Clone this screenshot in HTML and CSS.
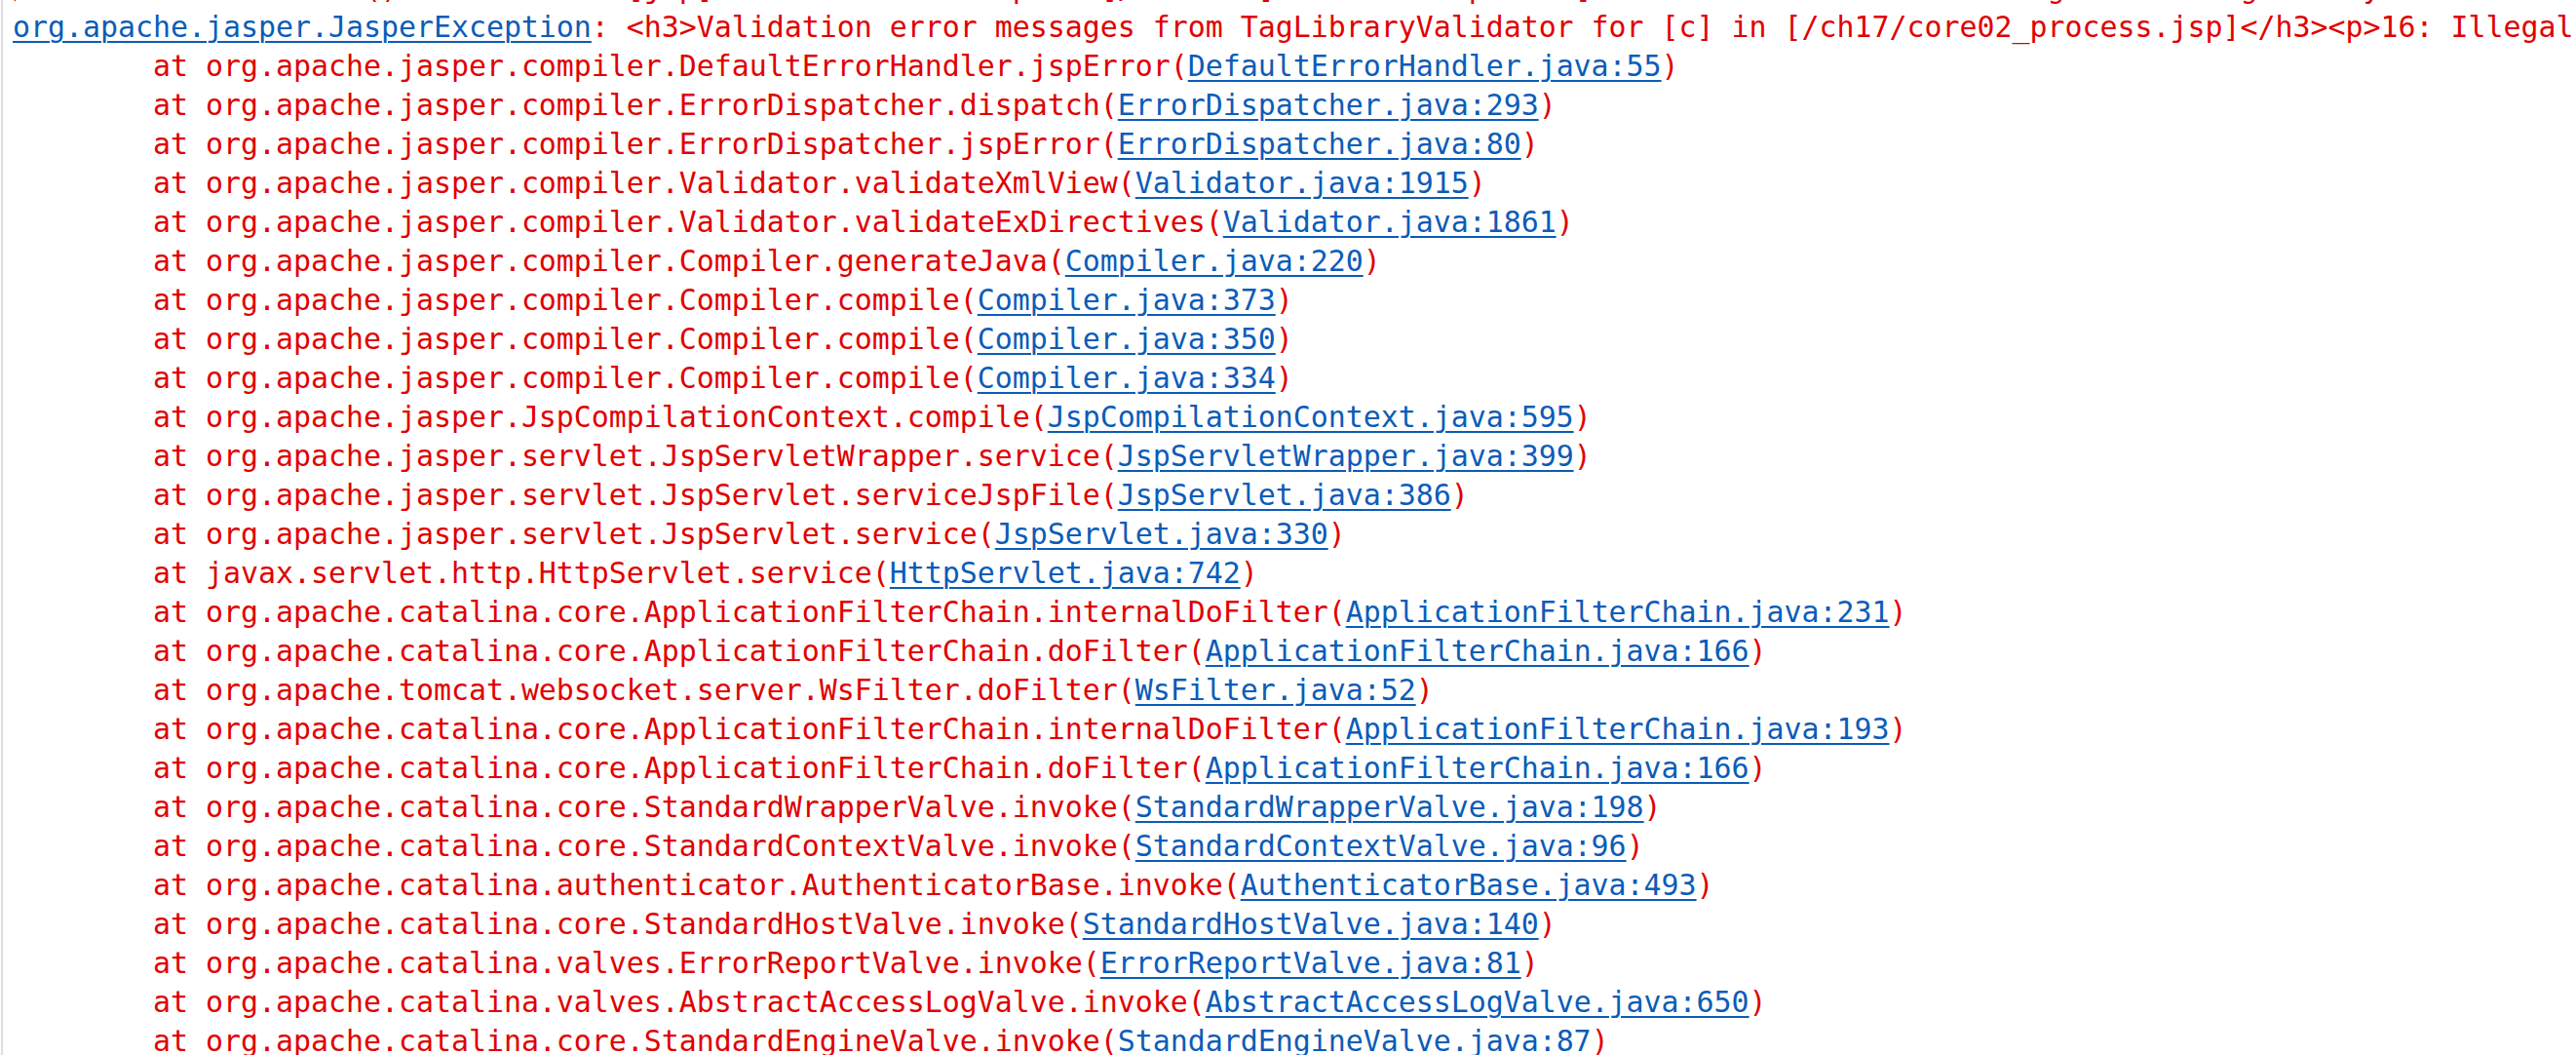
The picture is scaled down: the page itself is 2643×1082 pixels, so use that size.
FILE: index.html
```html
<!DOCTYPE html>
<html lang="en">
<head>
<meta charset="utf-8">
<title>Console</title>
<link rel="stylesheet" href="styles.css">
</head>
<body>
<div class="console">
<div class="log">
<div class="line"><span class="prefix">严重: </span>Servlet.service() for servlet [jsp] in context with path [/ch17web] threw exception [&lt;h3&gt;Validation error messages from TagLibraryValidator for [c] in [/ch17/core02_process.jsp]&lt;/h3&gt;&lt;p&gt;16: Illegal text inside "c:choose" tag</div>
<div class="line"><span class="link">org.apache.jasper.JasperException</span>: &lt;h3&gt;Validation error messages from TagLibraryValidator for [c] in [/ch17/core02_process.jsp]&lt;/h3&gt;&lt;p&gt;16: Illegal text inside "c:choose" tag: "&lt;br&gt;".&lt;/p&gt;</div>
<div class="line">	at org.apache.jasper.compiler.DefaultErrorHandler.jspError(<span class="link">DefaultErrorHandler.java:55</span>)</div>
<div class="line">	at org.apache.jasper.compiler.ErrorDispatcher.dispatch(<span class="link">ErrorDispatcher.java:293</span>)</div>
<div class="line">	at org.apache.jasper.compiler.ErrorDispatcher.jspError(<span class="link">ErrorDispatcher.java:80</span>)</div>
<div class="line">	at org.apache.jasper.compiler.Validator.validateXmlView(<span class="link">Validator.java:1915</span>)</div>
<div class="line">	at org.apache.jasper.compiler.Validator.validateExDirectives(<span class="link">Validator.java:1861</span>)</div>
<div class="line">	at org.apache.jasper.compiler.Compiler.generateJava(<span class="link">Compiler.java:220</span>)</div>
<div class="line">	at org.apache.jasper.compiler.Compiler.compile(<span class="link">Compiler.java:373</span>)</div>
<div class="line">	at org.apache.jasper.compiler.Compiler.compile(<span class="link">Compiler.java:350</span>)</div>
<div class="line">	at org.apache.jasper.compiler.Compiler.compile(<span class="link">Compiler.java:334</span>)</div>
<div class="line">	at org.apache.jasper.JspCompilationContext.compile(<span class="link">JspCompilationContext.java:595</span>)</div>
<div class="line">	at org.apache.jasper.servlet.JspServletWrapper.service(<span class="link">JspServletWrapper.java:399</span>)</div>
<div class="line">	at org.apache.jasper.servlet.JspServlet.serviceJspFile(<span class="link">JspServlet.java:386</span>)</div>
<div class="line">	at org.apache.jasper.servlet.JspServlet.service(<span class="link">JspServlet.java:330</span>)</div>
<div class="line">	at javax.servlet.http.HttpServlet.service(<span class="link">HttpServlet.java:742</span>)</div>
<div class="line">	at org.apache.catalina.core.ApplicationFilterChain.internalDoFilter(<span class="link">ApplicationFilterChain.java:231</span>)</div>
<div class="line">	at org.apache.catalina.core.ApplicationFilterChain.doFilter(<span class="link">ApplicationFilterChain.java:166</span>)</div>
<div class="line">	at org.apache.tomcat.websocket.server.WsFilter.doFilter(<span class="link">WsFilter.java:52</span>)</div>
<div class="line">	at org.apache.catalina.core.ApplicationFilterChain.internalDoFilter(<span class="link">ApplicationFilterChain.java:193</span>)</div>
<div class="line">	at org.apache.catalina.core.ApplicationFilterChain.doFilter(<span class="link">ApplicationFilterChain.java:166</span>)</div>
<div class="line">	at org.apache.catalina.core.StandardWrapperValve.invoke(<span class="link">StandardWrapperValve.java:198</span>)</div>
<div class="line">	at org.apache.catalina.core.StandardContextValve.invoke(<span class="link">StandardContextValve.java:96</span>)</div>
<div class="line">	at org.apache.catalina.authenticator.AuthenticatorBase.invoke(<span class="link">AuthenticatorBase.java:493</span>)</div>
<div class="line">	at org.apache.catalina.core.StandardHostValve.invoke(<span class="link">StandardHostValve.java:140</span>)</div>
<div class="line">	at org.apache.catalina.valves.ErrorReportValve.invoke(<span class="link">ErrorReportValve.java:81</span>)</div>
<div class="line">	at org.apache.catalina.valves.AbstractAccessLogValve.invoke(<span class="link">AbstractAccessLogValve.java:650</span>)</div>
<div class="line">	at org.apache.catalina.core.StandardEngineValve.invoke(<span class="link">StandardEngineValve.java:87</span>)</div>
<div class="line">	at org.apache.catalina.connector.CoyoteAdapter.service(<span class="link">CoyoteAdapter.java:342</span>)</div>
</div>
</div>
</body>
</html>
```

FILE: styles.css
```css
html, body {
  margin: 0;
  padding: 0;
  height: 100%;
  overflow: hidden;
  background: #ffffff;
}

.console {
  height: 100%;
  margin-left: 1px;
  border-left: 2px solid #dedede;
  padding-left: 10px;
  font-family: "DejaVu Sans Mono", "Noto Sans CJK SC", monospace;
  font-size: 29.9px;
  line-height: 40px;
  color: #e00000;
  overflow: hidden;
}

.log {
  margin-top: -32px;
}

.line {
  white-space: pre;
  tab-size: 8;
}

.prefix {
  display: inline-block;
  width: 5ch;
  overflow: hidden;
  vertical-align: top;
}

.link {
  color: #0b5cb8;
  text-decoration: underline;
  text-decoration-thickness: 2px;
  text-underline-offset: 4px;
}
```
